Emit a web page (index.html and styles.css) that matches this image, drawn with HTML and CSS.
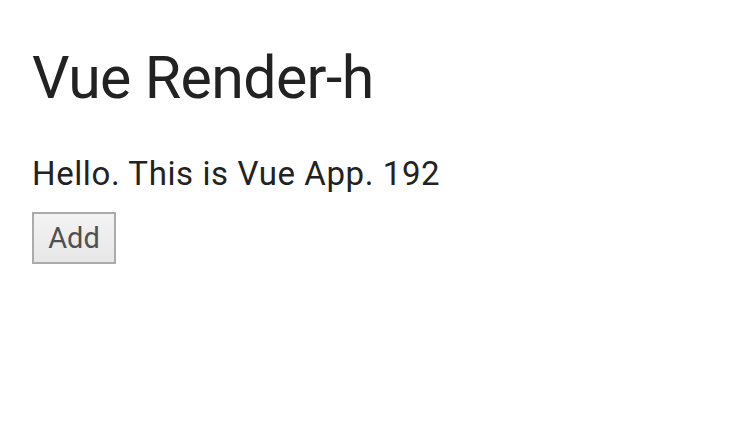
FILE: index.html
```html
<!DOCTYPE html>
<html>
<head>
<meta charset="utf-8">
<link rel="stylesheet" href="styles.css">
</head>
<body>
<div class="app">
  <h1 class="title">Vue Render-h</h1>
  <p class="msg">Hello. This is Vue App. 192</p>
  <button class="btn">Add</button>
</div>
</body>
</html>
```
FILE: styles.css
```css
html, body {
  margin: 0;
  padding: 0;
  background: #fff;
}
.app {
  padding: 38px 32px;
  font-family: Roboto, "Liberation Sans", sans-serif;
  color: #222;
}
.title {
  margin: 0;
  font-size: 59px;
  font-weight: 400;
  line-height: 80px;
  letter-spacing: -0.6px;
}
.msg {
  margin: 36px 0 0 0;
  font-size: 33px;
  line-height: 40px;
  letter-spacing: 0.6px;
}
.btn {
  margin-top: 18px;
  width: 84px;
  height: 52px;
  padding: 0;
  font-family: Roboto, "Liberation Sans", sans-serif;
  font-size: 29px;
  color: #505050;
  background: linear-gradient(#f3f3f3, #e7e7e7);
  border: 2px solid #ababab;
  border-radius: 0;
}
```
